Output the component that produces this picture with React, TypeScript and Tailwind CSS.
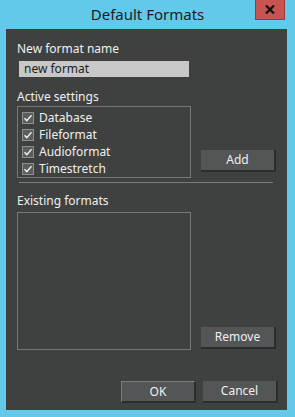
function Check({ label }: { label: string }) {
  return (
    <div className="flex items-center h-[17px]">
      <svg width="12" height="12" viewBox="0 0 12 12" className="shrink-0">
        <rect x="0.5" y="0.5" width="11" height="11" fill="#5b5c5c" stroke="#8e8f8f" />
        <path d="M2.5 6.2 L4.8 8.6 L9.5 3.2" fill="none" stroke="#f2f2f2" strokeWidth="1.4" />
      </svg>
      <span className="ml-[5px] leading-none">{label}</span>
    </div>
  );
}

function Btn({ children, focus }: { children: string; focus?: boolean }) {
  return (
    <button
      className={
        "w-[75px] h-[22px] bg-[#545556] text-[#eef0f0] text-[12px] leading-none border-r-2 border-b-2 border-[#2b2c2c] " +
        (focus ? "border-t border-l border-t-[#7a7b7b] border-l-[#7a7b7b]" : "")
      }
    >
      {children}
    </button>
  );
}

export default function App() {
  return (
    <div
      className="w-[295px] h-[417px] bg-[#62c9eb] flex flex-col overflow-hidden"
      style={{ fontFamily: '"Noto Sans", "Open Sans", sans-serif' }}
    >
      <div className="h-[29px] shrink-0 flex relative">
        <div className="flex-1 text-center text-[15px] text-[#1c1c1c] pt-[3px]">Default Formats</div>
        <div className="absolute left-[255px] top-0 w-[30px] h-[20px] bg-[#c75450] border border-t-0 border-[#9e3a37] flex items-center justify-center">
          <svg width="10" height="9" viewBox="0 0 10 9">
            <path d="M1 0.5 L9 8.5 M9 0.5 L1 8.5" stroke="#111" strokeWidth="2.2" />
          </svg>
        </div>
      </div>
      <div className="ml-[6px] mr-[8px] mb-[7px] flex-1 bg-[#3f4140] text-[#eef0f0] text-[12px] pl-[11px] pr-[11px] pt-[12px] flex flex-col">
        <div className="leading-[16px]">New format name</div>
        <div className="mt-[4px] ml-[2px] w-[170px] h-[16px] bg-[#c8c8c8] text-[#1e1e1e] pl-[5px] leading-[16px]">new format</div>
        <div className="mt-[12px] leading-[16px]">Active settings</div>
        <div className="mt-[1px] flex items-end">
          <div className="w-[174px] h-[72px] border border-[#777878] pl-[4px] pt-[2px] flex flex-col">
            <Check label="Database" />
            <Check label="Fileformat" />
            <Check label="Audioformat" />
            <Check label="Timestretch" />
          </div>
          <div className="ml-[10px] mb-[6px]">
            <Btn>Add</Btn>
          </div>
        </div>
        <div className="mt-[4px] ml-[2px] w-[254px] h-px bg-[#7a7b7b]"></div>
        <div className="mt-[10px] leading-[16px]">Existing formats</div>
        <div className="mt-[3px] flex items-end">
          <div className="w-[174px] h-[138px] border border-[#777878]"></div>
          <div className="ml-[10px] mb-[1px]">
            <Btn>Remove</Btn>
          </div>
        </div>
        <div className="mt-[31px] flex justify-end gap-[7px] mr-[-2px]">
          <Btn focus>OK</Btn>
          <Btn>Cancel</Btn>
        </div>
      </div>
    </div>
  );
}
